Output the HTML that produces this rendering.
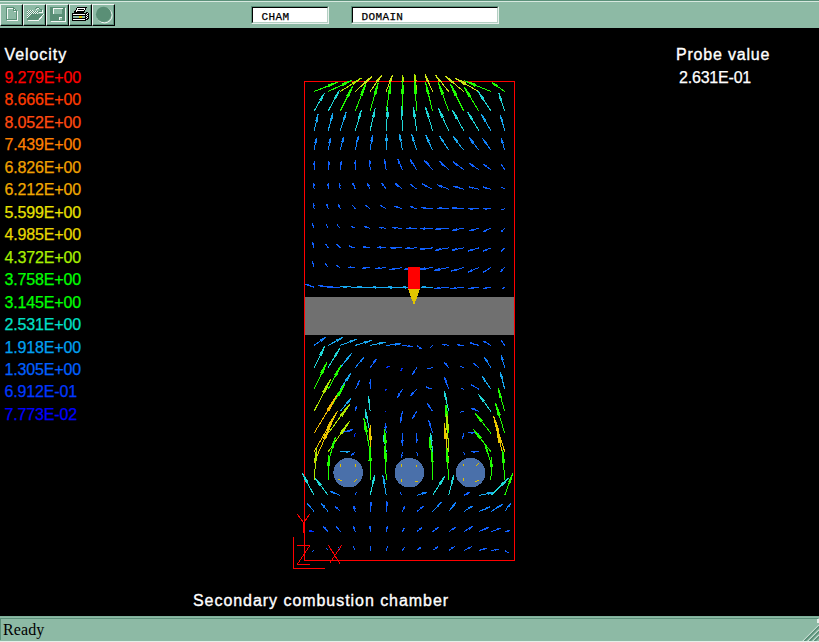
<!DOCTYPE html>
<html><head><meta charset="utf-8"><title>Secondary combustion chamber</title>
<style>
html,body{margin:0;padding:0;background:#000;overflow:hidden}
body{width:819px;height:642px;position:relative;font-family:"Liberation Sans",sans-serif}
#tb{position:absolute;left:0;top:0;width:819px;height:28px;background:#8dbaa5;border-top:1px solid #5b917a;box-sizing:border-box}
#tb:before{content:"";position:absolute;left:0;top:0;width:819px;height:1px;background:#d6e8df}
.btn{position:absolute;top:3px;width:23px;height:22px;box-sizing:border-box;border-left:1px solid #eef4f1;border-top:1px solid #eef4f1;border-right:1px solid #000;border-bottom:1px solid #000;background:#8dbaa5}
.btn:after{content:"";position:absolute;left:0;top:0;right:0;bottom:0;border-right:1px solid #5b917a;border-bottom:1px solid #5b917a}
.btn svg{position:absolute;left:0;top:0}
.fld{position:absolute;top:5px;height:18px;box-sizing:border-box;background:#fff;border:1px solid;border-color:#5b917a #e8f0ec #e8f0ec #5b917a;font:11px "Liberation Mono",monospace;color:#000}
.fld:after{content:"";position:absolute;left:0;top:0;right:0;bottom:0;border:1px solid;border-color:#000 #b4d0c3 #b4d0c3 #000}
.fld span{position:absolute;left:9.6px;top:3px;line-height:14px;letter-spacing:.35px;-webkit-text-stroke:.25px #000}
#sb{position:absolute;left:0;top:616px;width:819px;height:26px;background:#8dbaa5;box-sizing:border-box;border-top:1px solid #7fb09a;border-bottom:1px solid #e4efe9}
#sb .in{position:absolute;left:0;top:1px;width:818px;height:22px;box-sizing:border-box;border-top:1px solid #5b917a;border-left:1px solid #5b917a}
#sb .rw{position:absolute;left:817px;top:2px;width:2px;height:4px;background:#e4efe9}
#sb svg{position:absolute;left:801px;top:6px}
#sb .t{position:absolute;left:3px;top:4px;font:16px "Liberation Serif",serif;color:#000;line-height:18px;letter-spacing:.1px}
.lg{-webkit-text-stroke:.25px currentColor;position:absolute;left:4.4px;letter-spacing:-.15px;margin-top:1px;font-size:16px;line-height:18px;white-space:nowrap}
.w{position:absolute;color:#fff;white-space:nowrap;font-size:16px;line-height:18px;transform-origin:0 0}
  .b{-webkit-text-stroke:0.35px #fff;letter-spacing:.85px}
#plot{position:absolute;left:0;top:28px}
</style></head><body>
<div id="tb">
 <div class="btn" style="left:0"></div>
 <div class="btn" style="left:23px"></div>
 <div class="btn" style="left:46px"></div>
 <div class="btn" style="left:69px"></div>
 <div class="btn" style="left:92px"></div>
<svg id="ic" width="120" height="28" viewBox="0 0 120 28" shape-rendering="crispEdges" style="position:absolute;left:0;top:-1px">
<defs><pattern id="ck" width="2" height="2" patternUnits="userSpaceOnUse"><rect width="2" height="2" fill="#8dbaa5"/><rect width="1" height="1" fill="#f4f8f6"/><rect x="1" y="1" width="1" height="1" fill="#f4f8f6"/><rect x="1" y="0" width="1" height="1" fill="#5a8f76"/><rect x="0" y="1" width="1" height="1" fill="#5a8f76"/></pattern>
<pattern id="ck2" width="2" height="2" patternUnits="userSpaceOnUse"><rect width="2" height="2" fill="#fff"/><rect x="1" y="0" width="1" height="1" fill="#000"/><rect x="0" y="1" width="1" height="1" fill="#000"/></pattern></defs>
<!-- new page -->
<g fill="none" stroke="#f4f8f6"><path d="M7.5 19.5V8.5H13"/><path d="M17.5 11V20.5H7"/><path d="M14 9.5h1M14 11.5h2"/></g>
<g fill="none" stroke="#5a8f76"><path d="M6.5 7.5H13.5L16.5 10.5V19.5H6.5Z"/><path d="M13.5 8V10.5H16"/></g>
<!-- open folder -->
<path d="M27 10h5l1 1h5v4h-6l-5 5z" fill="url(#ck)"/>
<path d="M27 20h11l5 -6h-11z" fill="#5a8f76"/>
<g fill="none" stroke="#f4f8f6"><path d="M28 20.5H38.5L43.5 14.5"/><path d="M36 9.5h1M37 8.5h3M40 9.5h1M41 10.5h1M42 9.5V12.5H39"/></g>
<g fill="none" stroke="#5a8f76"><path d="M35 8.5h1M36 7.5h3M39 8.5h1M40 9.5h1M41 8.5V11.5H38"/></g>
<!-- floppy -->
<path d="M51.5 8V21.5H65.5V8" fill="none" stroke="#f4f8f6"/>
<rect x="50" y="7" width="15" height="14" fill="#5a8f76"/>
<rect x="53" y="8" width="9" height="6" fill="#8dbaa5"/>
<path d="M53.5 14V8.5H62" fill="none" stroke="#f4f8f6"/>
<rect x="62" y="8" width="1" height="1" fill="#f4f8f6"/>
<rect x="59" y="17" width="3" height="3" fill="#8dbaa5"/>
<path d="M59.5 20V17.5H62" fill="none" stroke="#f4f8f6"/>
<!-- printer -->
<path d="M77.5 7.5H86.5L83.5 12.5H74.5Z" fill="#fff" stroke="#000"/>
<path d="M78 9.500H84M77 11.5H83" stroke="#000" fill="none"/>
<path d="M85 13h2l1 1v5l-3 2z" fill="url(#ck2)"/>
<path d="M85.500 12.500L87.500 12.500L88.500 13.500V18.500L85.500 20.500" fill="none" stroke="#000"/>
<rect x="72.500" y="13.500" width="13" height="7" fill="#fff" stroke="#000"/>
<rect x="73" y="16" width="12" height="2" fill="#8dbaa5"/>
<path d="M73 15.500H85M73 18.500H85" stroke="#000" fill="none"/>
<rect x="79" y="16" width="3" height="2" fill="#e0c800"/>
<!-- circle -->
<circle cx="104.600" cy="15.400" r="7.500" fill="none" stroke="#f4f8f6" stroke-width="1" shape-rendering="auto"/>
<circle cx="103.600" cy="14.400" r="7.700" fill="#5a8f76" shape-rendering="auto"/>
</svg>
 <div class="fld" style="left:251px;width:78px"><span>CHAM</span></div>
 <div class="fld" style="left:351px;width:148px"><span>DOMAIN</span></div>
</div>
<svg id="plot" width="819" height="588" viewBox="0 28 819 588" shape-rendering="crispEdges">
<rect x="305" y="297" width="209" height="38" fill="#707070"/>
<rect x="304.5" y="81.5" width="210" height="479" fill="none" stroke="#f00" stroke-width="1"/>
<!--ARROWS-->
<style>.ab0{stroke:#0030ff;fill:#0030ff}.ab{stroke:#1060ff;fill:#1060ff}.ab2{stroke:#1080ff;fill:#1080ff}.acb{stroke:#18a8f0;fill:#18a8f0}.ac{stroke:#20d8d8;fill:#20d8d8}.ag{stroke:#20ff00;fill:#20ff00}.ayg{stroke:#b0e800;fill:#b0e800}.ay{stroke:#cce418;fill:#cce418}.ayo{stroke:#ecc800;fill:#ecc800}.ao{stroke:#f4bc00;fill:#f4bc00}</style><g stroke-width="1">
<path class="ag" d="M314.1 91.5L338 82.1L328.8 86.7L328.1 85L338 82.1"/>
<path class="ag" d="M328.2 91.5L352 80.2L342.9 85.6L342.1 83.9L352 80.2"/>
<path class="ayg" d="M340.3 91.5L361.7 77.9L353.6 84.1L352.7 82.6L361.7 77.9"/>
<path class="ay" d="M355.3 91.5L371.9 76.4L365.8 83.1L364.7 81.8L371.9 76.4"/>
<path class="ay" d="M370.1 91.5L381.9 75.1L377.8 82.1L376.5 81.2L381.9 75.1"/>
<path class="ay" d="M386.2 91.5L392.5 75.1L390.7 81.9L389.3 81.4L392.5 75.1"/>
<path class="ayg" d="M402.4 91.5L402.8 75.1L403.4 81.7L401.9 81.6L402.8 75.1"/>
<path class="ayg" d="M416.7 91.5L414.7 74L416.2 80.9L414.8 81.1L414.7 74"/>
<path class="ay" d="M432.6 91.5L425.1 74.7L428.8 81.1L427.4 81.7L425.1 74.7"/>
<path class="ay" d="M448.7 91.5L435.3 75L441.3 81.1L440 82.1L435.3 75"/>
<path class="ay" d="M463.7 91.5L445.2 76.1L453.2 81.6L452 82.9L445.2 76.1"/>
<path class="ay" d="M478.8 91.5L455 78.1L465 82.6L464.1 84.3L455 78.1"/>
<path class="ag" d="M490.9 91.5L464.4 80.8L475.4 84.2L474.6 86L464.4 80.8"/>
<path class="ag" d="M504.7 91.5L491.9 82.5L497.4 85.5L496.6 86.7L491.9 82.5"/>
<path class="ac" d="M314.1 111L324.6 92.9L321.1 100.6L319.7 99.8L324.6 92.9"/>
<path class="ac" d="M328.2 111L339.6 89.8L335.8 98.7L334.3 97.9L339.6 89.8"/>
<path class="ag" d="M340.3 111L352.7 86.2L348.6 96.6L346.9 95.7L352.7 86.2"/>
<path class="ag" d="M355.3 111L365.8 83.8L362.5 95L360.7 94.3L365.8 83.8"/>
<path class="ag" d="M370.1 111L378.2 82.5L375.9 94.2L374 93.7L378.2 82.5"/>
<path class="ag" d="M386.2 111L391 82.2L390.1 93.9L388.1 93.5L391 82.2"/>
<path class="ag" d="M402.4 111L402.8 81.3L403.6 93.2L401.6 93.2L402.8 81.3"/>
<path class="ag" d="M416.7 111L414.7 81.3L416.5 93.2L414.5 93.3L414.7 81.3"/>
<path class="ag" d="M432.6 111L425.5 82.2L429.3 93.5L427.4 93.9L425.5 82.2"/>
<path class="ag" d="M448.7 111L438.4 82.5L443.5 93.6L441.6 94.3L438.4 82.5"/>
<path class="ag" d="M463.7 111L450.3 83.8L456.6 94.2L454.7 95.1L450.3 83.8"/>
<path class="ag" d="M478.8 111L463.8 86.4L470.6 95.8L469 96.8L463.8 86.4"/>
<path class="ac" d="M490.9 111L477.9 91.2L483.8 98.6L482.4 99.6L477.9 91.2"/>
<path class="ac" d="M504.7 111L498.7 92.9L501.8 99.9L500.4 100.4L498.7 92.9"/>
<path class="acb" d="M314.1 130.6L318.1 114.1L317.2 120.9L315.8 120.5L318.1 114.1"/>
<path class="acb" d="M328.2 130.6L333 112.7L331.8 120.1L330.3 119.7L333 112.7"/>
<path class="acb" d="M340.3 130.6L346.3 111.8L344.6 119.6L343.2 119.1L346.3 111.8"/>
<path class="ac" d="M355.3 130.6L361.5 110L359.8 118.5L358.2 118L361.5 110"/>
<path class="ac" d="M370.1 130.6L375.2 108L374 117.2L372.3 116.9L375.2 108"/>
<path class="ac" d="M386.2 130.6L387.9 106.7L388.1 116.3L386.3 116.2L387.9 106.7"/>
<path class="ac" d="M402.4 130.6L401.5 106L402.8 115.8L401 115.9L401.5 106"/>
<path class="ac" d="M416.7 130.6L413.3 106.7L415.5 116.1L413.8 116.4L413.3 106.7"/>
<path class="ac" d="M432.6 130.6L425.5 107L429.2 116.2L427.5 116.7L425.5 107"/>
<path class="ac" d="M448.7 130.6L438.2 108L443.2 116.7L441.6 117.4L438.2 108"/>
<path class="ac" d="M463.7 130.6L452.3 110L457.6 117.8L456.1 118.7L452.3 110"/>
<path class="ac" d="M478.8 130.6L467.5 111.8L472.7 118.9L471.3 119.7L467.5 111.8"/>
<path class="acb" d="M490.9 130.6L481.2 114.1L485.7 120.3L484.4 121.1L481.2 114.1"/>
<path class="acb" d="M504.7 130.6L500.3 114.8L502.7 120.9L501.4 121.3L500.3 114.8"/>
<path class="ab2" d="M314.1 150.2L316.4 137.7L316.1 142.8L314.9 142.5L316.4 137.7"/>
<path class="ab2" d="M328.2 150.2L330.6 137.7L330.3 142.8L329 142.5L330.6 137.7"/>
<path class="ab2" d="M340.3 150.2L343.7 136.8L343 142.3L341.7 141.9L343.7 136.8"/>
<path class="ab2" d="M355.3 150.2L358.4 135.7L357.8 141.6L356.5 141.3L358.4 135.7"/>
<path class="ab2" d="M370.1 150.2L372.5 134.8L372.2 141L370.9 140.8L372.5 134.8"/>
<path class="acb" d="M386.2 150.2L386.6 133.7L387.2 140.3L385.7 140.2L386.6 133.7"/>
<path class="acb" d="M402.4 150.2L399.7 134.3L401.5 140.6L400.1 140.8L399.7 134.3"/>
<path class="acb" d="M416.7 150.2L411.6 134.3L414.3 140.5L413 140.9L411.6 134.3"/>
<path class="acb" d="M432.6 150.2L425.5 134.8L429 140.6L427.7 141.2L425.5 134.8"/>
<path class="acb" d="M448.7 150.2L439.3 135.7L443.7 141.1L442.4 141.8L439.3 135.7"/>
<path class="acb" d="M463.7 150.2L453.2 136.8L458 141.7L456.8 142.6L453.2 136.8"/>
<path class="ab2" d="M478.8 150.2L469.1 137.7L473.5 142.2L472.4 143.1L469.1 137.7"/>
<path class="ab2" d="M490.9 150.2L482.6 138.3L486.5 142.7L485.4 143.5L482.6 138.3"/>
<path class="ab2" d="M504.7 150.2L501.3 138.3L503.3 142.9L502.1 143.2L501.3 138.3"/>
<path class="ab" d="M314.1 169.7L314.5 161L314.9 164.5L313.8 164.5L314.5 161"/>
<path class="ab" d="M328.2 169.7L328.9 161L329.2 164.5L328.1 164.4L328.9 161"/>
<path class="ab" d="M340.3 169.7L341.4 160.7L341.5 164.4L340.4 164.2L341.4 160.7"/>
<path class="ab" d="M355.3 169.7L355.3 159.9L355.9 163.8L354.7 163.8L355.3 159.9"/>
<path class="ab" d="M370.1 169.7L369.8 159.9L370.5 163.8L369.4 163.8L369.8 159.9"/>
<path class="ab" d="M386.2 169.7L384.3 159L385.6 163.2L384.5 163.4L384.3 159"/>
<path class="ab" d="M402.4 169.7L397.7 159L400.1 163L399 163.5L397.7 159"/>
<path class="ab" d="M416.7 169.7L410 159.4L413.2 163.2L412.2 163.9L410 159.4"/>
<path class="ab" d="M432.6 169.7L424 159.9L427.9 163.4L427 164.2L424 159.9"/>
<path class="ab" d="M448.7 169.7L439 161L443.3 164L442.5 165L439 161"/>
<path class="ab" d="M463.7 169.7L453.2 161.9L457.8 164.5L457 165.5L453.2 161.9"/>
<path class="ab" d="M478.8 169.7L469.1 163L473.3 165.2L472.6 166.2L469.1 163"/>
<path class="ab" d="M490.9 169.7L483.2 164.1L486.6 165.9L486 166.8L483.2 164.1"/>
<path class="ab" d="M504.7 169.7L501.3 164.1L503.1 166.1L502.2 166.6L501.3 164.1"/>
<path class="ab" d="M314.1 189.2L313.7 182.9L314.3 185.4L313.4 185.5L313.7 182.9"/>
<path class="ab" d="M328.2 189.2L328.2 182.9L328.7 185.5L327.7 185.5L328.2 182.9"/>
<path class="ab" d="M340.3 189.2L339 182.9L340 185.4L339 185.6L339 182.9"/>
<path class="ab" d="M355.3 189.2L352.6 182.9L354.1 185.3L353.2 185.7L352.6 182.9"/>
<path class="ab" d="M370.1 189.2L367.4 182.9L368.9 185.3L368 185.7L367.4 182.9"/>
<path class="ab" d="M386.2 189.2L381.5 182.9L383.8 185.2L383 185.8L381.5 182.9"/>
<path class="ab" d="M402.4 189.2L394.7 182.9L398.1 185L397.4 185.9L394.7 182.9"/>
<path class="ab" d="M416.7 189.2L410 184.2L413 185.8L412.4 186.7L410 184.2"/>
<path class="ab" d="M432.6 189.2L422.1 183.8L426.6 185.5L426 186.6L422.1 183.8"/>
<path class="ab" d="M448.7 189.2L437.1 184.7L442 185.9L441.5 187.1L437.1 184.7"/>
<path class="ab" d="M463.7 189.2L453 186.1L457.5 186.8L457.1 187.9L453 186.1"/>
<path class="ab" d="M478.8 189.2L469.1 186.9L473.1 187.3L472.8 188.4L469.1 186.9"/>
<path class="ab" d="M490.9 189.2L483.2 186.9L486.4 187.4L486.1 188.4L483.2 186.9"/>
<path class="ab" d="M504.7 189.2L501.1 186.9"/>
<path class="ab" d="M314.1 208.8L313 203L313.9 205.2L313 205.4L313 203"/>
<path class="ab" d="M328.2 208.8L326.9 203.8L327.9 205.7L327 205.9L326.9 203.8"/>
<path class="ab" d="M340.3 208.8L338 204.1L339.3 205.8L338.5 206.2L338 204.1"/>
<path class="ab" d="M355.3 208.8L352.6 205.2"/>
<path class="ab" d="M370.1 208.8L365.7 205.2L367.8 206.3L367.2 207L365.7 205.2"/>
<path class="ab" d="M386.2 208.8L379.8 205.2L382.6 206.2L382.1 207.1L379.8 205.2"/>
<path class="ab" d="M402.4 208.8L394.4 206.1L397.8 206.7L397.4 207.7L394.4 206.1"/>
<path class="ab" d="M416.7 208.8L410 206.5L412.8 206.9L412.5 207.9L410 206.5"/>
<path class="ab" d="M432.6 208.8L421.2 207.5L425.8 207.4L425.7 208.6L421.2 207.5"/>
<path class="ab" d="M448.7 208.8L437.3 208.1L441.9 207.8L441.8 209L437.3 208.1"/>
<path class="ab" d="M463.7 208.8L451.9 208L456.7 207.7L456.6 208.9L451.9 208"/>
<path class="ab" d="M478.8 208.8L468.3 208.8L472.5 208.2L472.5 209.4L468.3 208.8"/>
<path class="ab" d="M490.9 208.8L483.5 208.8L486.5 208.3L486.5 209.3L483.5 208.8"/>
<path class="ab" d="M504.7 208.8L500.7 210.1"/>
<path class="ab" d="M314.1 228.3L312 223.2L313.3 225.1L312.4 225.4L312 223.2"/>
<path class="ab" d="M328.2 228.3L325.9 223.9"/>
<path class="ab" d="M340.3 228.3L337.1 224.8"/>
<path class="ab" d="M355.3 228.3L350.6 225.8L352.7 226.4L352.3 227.2L350.6 225.8"/>
<path class="ab" d="M370.1 228.3L363.8 226.2L366.5 226.6L366.2 227.6L363.8 226.2"/>
<path class="ab" d="M386.2 228.3L378.8 227.2L381.8 227.2L381.7 228.2L378.8 227.2"/>
<path class="ab" d="M402.4 228.3L391.7 227.5L396 227.3L395.9 228.5L391.7 227.5"/>
<path class="ab" d="M416.7 228.3L406 228.3L410.3 227.8L410.3 228.9L406 228.3"/>
<path class="ab" d="M432.6 228.3L419.8 228.7L424.9 227.9L424.9 229.2L419.8 228.7"/>
<path class="ab" d="M448.7 228.3L434.7 229.2L440.3 228.2L440.3 229.5L434.7 229.2"/>
<path class="ab" d="M463.7 228.3L451.9 230.2L456.5 228.9L456.7 230.1L451.9 230.2"/>
<path class="ab" d="M478.8 228.3L469.1 230.7L472.8 229.2L473.1 230.3L469.1 230.7"/>
<path class="ab" d="M490.9 228.3L483.2 231.5L486.1 229.8L486.5 230.8L483.2 231.5"/>
<path class="ab" d="M504.7 228.3L500.7 232.3L502 230.4L502.6 231.1L500.7 232.3"/>
<path class="ab" d="M314.1 247.9L312 241.9L313.3 244.1L312.4 244.5L312 241.9"/>
<path class="ab" d="M328.2 247.9L325.5 243.6L327 245.1L326.2 245.6L325.5 243.6"/>
<path class="ab" d="M340.3 247.9L336.7 244.1L338.5 245.3L337.8 245.9L336.7 244.1"/>
<path class="ab" d="M355.3 247.9L348.6 245.9L351.4 246.2L351.1 247.2L348.6 245.9"/>
<path class="ab" d="M370.1 247.9L362.7 246.8L365.7 246.7L365.6 247.7L362.7 246.8"/>
<path class="ab" d="M386.2 247.9L376.8 247.2L380.6 246.9L380.5 248L376.8 247.2"/>
<path class="ab" d="M402.4 247.9L390.4 247.9L395.2 247.3L395.2 248.5L390.4 247.9"/>
<path class="ab" d="M416.7 247.9L404.7 248.4L409.5 247.6L409.5 248.8L404.7 248.4"/>
<path class="ab" d="M432.6 247.9L419.6 249.2L424.7 248L424.9 249.3L419.6 249.2"/>
<path class="ab" d="M448.7 247.9L435.3 250.2L440.6 248.6L440.8 249.9L435.3 250.2"/>
<path class="ab" d="M463.7 247.9L451.9 250.2L456.5 248.7L456.7 249.9L451.9 250.2"/>
<path class="ab" d="M478.8 247.9L468.1 251.1L472.2 249.2L472.6 250.4L468.1 251.1"/>
<path class="ab" d="M490.9 247.9L483.2 251.1L486.1 249.3L486.5 250.3L483.2 251.1"/>
<path class="ab" d="M504.7 247.9L500.7 251.5L502 249.7L502.6 250.4L500.7 251.5"/>
<path class="ab" d="M314.1 267.5L312 261.2L313.3 263.5L312.4 263.8L312 261.2"/>
<path class="ab" d="M328.2 267.5L325 263.2L326.7 264.6L325.9 265.1L325 263.2"/>
<path class="ab" d="M340.3 267.5L336 265.2"/>
<path class="ab" d="M355.3 267.5L347.6 267.5L350.7 266.9L350.7 268L347.6 267.5"/>
<path class="ab" d="M370.1 267.5L361.6 268.4L364.9 267.5L365.1 268.5L361.6 268.4"/>
<path class="ab" d="M386.2 267.5L374.8 268.8L379.3 267.6L379.4 268.8L374.8 268.8"/>
<path class="ab" d="M402.4 267.5L389.6 269.9L394.6 268.3L394.8 269.5L389.6 269.9"/>
<path class="ab" d="M416.7 267.5L403.7 269.5L408.8 268L409 269.3L403.7 269.5"/>
<path class="ab" d="M432.6 267.5L419.8 269.2L424.8 267.8L425 269.1L419.8 269.2"/>
<path class="ab" d="M448.7 267.5L433.7 270.6L439.6 268.6L439.8 270L433.7 270.6"/>
<path class="ab" d="M463.7 267.5L450.9 271.3L455.8 269.1L456.2 270.3L450.9 271.3"/>
<path class="ab" d="M478.8 267.5L467.7 272.3L471.9 269.8L472.4 270.9L467.7 272.3"/>
<path class="ab" d="M490.9 267.5L483.2 272.3L486 269.9L486.6 270.8L483.2 272.3"/>
<path class="ab" d="M504.7 267.5L500.7 271.8L501.9 269.7L502.7 270.4L500.7 271.8"/>
<path class="ab" d="M314.1 287.2L305 284.2L308.8 284.9L308.5 285.9L305 284.2"/>
<path class="ab" d="M328.2 287.2L318.2 285.2L322.3 285.4L322.1 286.6L318.2 285.2"/>
<path class="ab" d="M340.3 287.2L326.6 286.9L332.1 286.4L332.1 287.7L326.6 286.9"/>
<path class="acb" d="M355.3 287.2L340.5 286.5L346.5 286.1L346.4 287.5L340.5 286.5"/>
<path class="acb" d="M370.1 287.2L355.3 287.2L361.2 286.5L361.2 287.9L355.3 287.2"/>
<path class="acb" d="M386.2 287.2L368.7 287.5L375.7 286.6L375.7 288.1L368.7 287.5"/>
<path class="acb" d="M402.4 287.2L383.6 287.5L391.1 286.6L391.1 288.1L383.6 287.5"/>
<path class="acb" d="M416.7 287.2L398.7 287.5L405.9 286.6L405.9 288.1L398.7 287.5"/>
<path class="acb" d="M432.6 287.2L420.6 287.2L425.4 286.6L425.4 287.8L420.6 287.2"/>
<path class="ab" d="M448.7 287.2L433.7 288.8L439.6 287.5L439.8 288.8L433.7 288.8"/>
<path class="ab" d="M463.7 287.2L450.4 288.8L455.6 287.5L455.8 288.8L450.4 288.8"/>
<path class="ab" d="M478.8 287.2L468.3 288.8L472.4 287.6L472.6 288.7L468.3 288.8"/>
<path class="ab" d="M490.9 287.2L483.4 288.8L486.3 287.7L486.5 288.7L483.4 288.8"/>
<path class="ab" d="M504.7 287.2L501.5 289.2"/>
<path class="ab2" d="M314.1 345.4L325.5 337.3L321.3 341.1L320.6 340L325.5 337.3"/>
<path class="acb" d="M328.2 345.4L343 337.3L337.4 341.2L336.7 339.9L343 337.3"/>
<path class="acb" d="M340.3 345.4L357.1 339.1L350.6 342.3L350.1 340.9L357.1 339.1"/>
<path class="acb" d="M355.3 345.4L371.8 340.4L365.4 343.1L365 341.7L371.8 340.4"/>
<path class="acb" d="M370.1 345.4L385.9 342.2L379.7 344.2L379.4 342.8L385.9 342.2"/>
<path class="ab2" d="M386.2 345.4L401.2 343.8L395.3 345.1L395.1 343.8L401.2 343.8"/>
<path class="ab" d="M402.4 345.4L412.7 346.7L408.5 346.8L408.7 345.6L412.7 346.7"/>
<path class="ab" d="M416.7 345.4L421.8 349L419.5 348L420 347.2L421.8 349"/>
<path class="ab" d="M432.6 345.4L429.9 348.2"/>
<path class="ab" d="M448.7 345.4L442.3 344.1L445 344.1L444.8 345.1L442.3 344.1"/>
<path class="ab" d="M463.7 345.4L457.1 344.7L459.8 344.5L459.7 345.5L457.1 344.7"/>
<path class="ab" d="M478.8 345.4L469.9 342.7L473.6 343.2L473.3 344.3L469.9 342.7"/>
<path class="ab" d="M490.9 345.4L483.1 341L486.5 342.3L486 343.2L483.1 341"/>
<path class="ab" d="M504.7 345.4L500.9 339.6L502.8 341.6L502 342.2L500.9 339.6"/>
<path class="ac" d="M314.1 367.6L324.8 346.4L321.3 355.3L319.7 354.5L324.8 346.4"/>
<path class="ac" d="M328.2 367.6L339.9 348.1L335.9 356.3L334.5 355.5L339.9 348.1"/>
<path class="acb" d="M340.3 367.6L351.7 353.1L347.7 359.4L346.5 358.4L351.7 353.1"/>
<path class="ab2" d="M355.3 367.6L363.8 357.3L360.9 361.8L359.9 361L363.8 357.3"/>
<path class="ab" d="M370.1 367.6L376.8 358.9L374.6 362.7L373.7 362L376.8 358.9"/>
<path class="ab0" d="M386.2 367.6L389.4 366.1"/>
<path class="ab0" d="M402.4 367.6L400.8 371"/>
<path class="ab" d="M416.7 367.6L412.1 375L413.5 371.8L414.4 372.3L412.1 375"/>
<path class="ab" d="M432.6 367.6L426.8 368.9L429 367.9L429.2 368.8L426.8 368.9"/>
<path class="ab" d="M448.7 367.6L443.9 362L446.2 363.9L445.4 364.6L443.9 362"/>
<path class="ab" d="M463.7 367.6L460.1 366.3"/>
<path class="ab" d="M478.8 367.6L473 362.9L475.6 364.4L475 365.2L473 362.9"/>
<path class="ab2" d="M490.9 367.6L484.2 357.3L487.4 361.1L486.4 361.8L484.2 357.3"/>
<path class="ab2" d="M504.7 367.6L501.2 355.2L503.2 360L502 360.3L501.2 355.2"/>
<path class="ag" d="M314.1 389.1L326.9 362.2L322.7 373.4L320.9 372.5L326.9 362.2"/>
<path class="ag" d="M328.2 389.1L341 365.2L336.7 375.2L335 374.3L341 365.2"/>
<path class="acb" d="M340.3 389.1L350.7 373.5L347.2 380.2L345.9 379.3L350.7 373.5"/>
<path class="ab" d="M355.3 389.1L359.7 380.4L358.4 384.1L357.4 383.6L359.7 380.4"/>
<path class="ab" d="M370.1 389.1L370.5 379.1L370.9 383.1L369.8 383.1L370.5 379.1"/>
<path class="ab0" d="M386.2 389.1L384.9 390.4"/>
<path class="ab" d="M402.4 389.1L397.3 397.8L398.8 394L399.8 394.6L397.3 397.8"/>
<path class="ab" d="M416.7 389.1L410.4 395.8L412.5 392.7L413.3 393.5L410.4 395.8"/>
<path class="ab" d="M432.6 389.1L425.5 386.8L428.5 387.2L428.2 388.2L425.5 386.8"/>
<path class="ab" d="M448.7 389.1L444.3 377.1L446.7 381.7L445.5 382.1L444.3 377.1"/>
<path class="ab" d="M463.7 389.1L460.5 388.7"/>
<path class="ab" d="M478.8 389.1L471 384.7L474.4 386L473.9 386.9L471 384.7"/>
<path class="acb" d="M490.9 389.1L482 376.3L486.1 381L485 381.8L482 376.3"/>
<path class="acb" d="M504.7 389.1L500.3 371.9L502.8 378.6L501.3 379L500.3 371.9"/>
<path class="ayg" d="M314.1 411.3L330.7 379L325 392.4L323.1 391.4L330.7 379"/>
<path class="ag" d="M328.2 411.3L345.2 383.7L339.3 395.3L337.5 394.2L345.2 383.7"/>
<path class="acb" d="M340.3 411.3L351.3 397.9L347.5 403.7L346.3 402.8L351.3 397.9"/>
<path class="ab" d="M355.3 411.3L356.6 405.9L356.5 408.2L355.6 407.9L356.6 405.9"/>
<path class="ac" d="M370.1 411.3L368.5 396.3L369.8 402.2L368.5 402.4L368.5 396.3"/>
<path class="ab0" d="M386.2 411.3L385.2 411.6"/>
<path class="ab" d="M402.4 411.3L400.4 422.7L400.6 418L401.8 418.2L400.4 422.7"/>
<path class="ab" d="M416.7 411.3L412.4 418.7L413.7 415.5L414.6 416L412.4 418.7"/>
<path class="ab" d="M432.6 411.3L427 403.3L429.7 406.2L428.8 406.8L427 403.3"/>
<path class="ac" d="M448.7 411.3L444.3 391.3L446.8 399.1L445.3 399.5L444.3 391.3"/>
<path class="ab" d="M463.7 411.3L460 412.3"/>
<path class="ab" d="M478.8 411.3L471 408.2L474.3 408.9L473.9 409.9L471 408.2"/>
<path class="ac" d="M490.9 411.3L478.3 394.1L484 400.5L482.7 401.5L478.3 394.1"/>
<path class="ag" d="M504.7 411.3L498.1 388.1L501.6 397.1L499.9 397.6L498.1 388.1"/>
<path class="ao" d="M314.1 433.2L337.1 395L328.8 410.8L327 409.7L337.1 395"/>
<path class="ayg" d="M328.2 433.2L350 403.8L342.2 416.2L340.4 414.9L350 403.8"/>
<path class="ab" d="M340.3 433.2L353.1 429.5L348.2 431.6L347.8 430.4L353.1 429.5"/>
<path class="ab0" d="M355.3 433.2L354.4 436.6"/>
<path class="ac" d="M370.1 433.2L365 409.2L367.9 418.6L366.2 419L365 409.2"/>
<path class="ab" d="M386.2 433.2L385.2 423.2L386.2 427.1L385 427.3L385.2 423.2"/>
<path class="ab" d="M402.4 433.2L402.4 446L401.8 440.9L403 440.9L402.4 446"/>
<path class="ab" d="M416.7 433.2L416.7 443.2L416.1 439.2L417.3 439.2L416.7 443.2"/>
<path class="ab" d="M432.6 433.2L428.6 419.8L430.8 425L429.6 425.3L428.6 419.8"/>
<path class="ag" d="M448.7 433.2L445.9 404.6L448 415.9L446 416.1L445.9 404.6"/>
<path class="ab" d="M463.7 433.2L462.2 438.8L462.3 436.4L463.3 436.7L462.2 438.8"/>
<path class="ab" d="M478.8 433.2L468.4 432.5L472.6 432.2L472.5 433.4L468.4 432.5"/>
<path class="ag" d="M490.9 433.2L475.3 413.5L482.2 420.8L480.8 421.9L475.3 413.5"/>
<path class="ag" d="M504.7 433.2L495.4 402.9L500.1 414.7L498.1 415.3L495.4 402.9"/>
<path class="ayo" d="M314.1 451.7L337.5 411.3L329.1 428L327.2 426.9L337.5 411.3"/>
<path class="ayg" d="M328.2 451.7L350 420.7L342.2 433.7L340.4 432.5L350 420.7"/>
<path class="acb" d="M340.3 451.7L350.1 451.7L346.2 452.3L346.2 451.1L350.1 451.7"/>
<path class="ab" d="M355.3 451.7L351 455.4L352.4 453.6L353 454.3L351 455.4"/>
<path class="ag" d="M370.1 451.7L363.8 417.9L367.4 431.2L365.2 431.6L363.8 417.9"/>
<path class="ac" d="M386.2 451.7L383.7 435L385.4 441.6L384 441.8L383.7 435"/>
<path class="ab" d="M402.4 451.7L401.4 457.7L401.3 455.2L402.3 455.4L401.4 457.7"/>
<path class="ab" d="M416.7 451.7L417.7 456.4"/>
<path class="ac" d="M432.6 451.7L430.6 433.5L432.1 440.7L430.7 440.9L430.6 433.5"/>
<path class="ayg" d="M448.7 451.7L446.8 414.4L448.7 429.3L446.5 429.4L446.8 414.4"/>
<path class="ab" d="M463.7 451.7L464.9 455.1"/>
<path class="ab" d="M478.8 451.7L471 451.7L474.1 451.2L474.1 452.2L471 451.7"/>
<path class="ag" d="M490.9 451.7L473.2 429.1L481.1 437.5L479.5 438.7L473.2 429.1"/>
<path class="ayo" d="M504.7 451.7L493.5 416.2L499 430.1L496.9 430.7L493.5 416.2"/>
<path class="ayo" d="M314.1 462.5L331.8 422.5L325.7 438.9L323.7 438.1L331.8 422.5"/>
<path class="ag" d="M328.2 462.5L335.4 437L333.4 447.5L331.6 446.9L335.4 437"/>
<path class="ayo" d="M370.1 462.5L370.3 424.9L371.3 439.9L369.1 439.9L370.3 424.9"/>
<path class="ag" d="M386.2 462.5L384.5 428.8L386.3 442.2L384.1 442.3L384.5 428.8"/>
<path class="ag" d="M432.6 462.5L429.3 437.1L431.5 447.1L429.7 447.4L429.3 437.1"/>
<path class="ayo" d="M448.7 462.5L444.1 422.6L447 438.4L444.8 438.7L444.1 422.6"/>
<path class="ag" d="M490.9 462.5L484.8 443.7L488 451L486.5 451.5L484.8 443.7"/>
<path class="ayo" d="M504.7 462.5L496.6 428.7L500.9 442L498.8 442.5L496.6 428.7"/>
<path class="ayg" d="M314.1 480.4L316.7 447.4L316.7 460.7L314.6 460.5L316.7 447.4"/>
<path class="ag" d="M328.2 480.4L328.8 455.4L329.5 465.4L327.7 465.4L328.8 455.4"/>
<path class="ag" d="M370.1 480.4L370.1 446.7L371.2 460.2L369 460.2L370.1 446.7"/>
<path class="ag" d="M386.2 480.4L385.1 444.4L386.6 458.8L384.4 458.8L385.1 444.4"/>
<path class="ag" d="M432.6 480.4L431.7 449.4L433.1 461.8L431 461.8L431.7 449.4"/>
<path class="ag" d="M448.7 480.4L446.8 448.4L448.6 461.1L446.5 461.3L446.8 448.4"/>
<path class="ag" d="M490.9 480.4L491.6 457.4L492.2 466.6L490.5 466.6L491.6 457.4"/>
<path class="ag" d="M504.7 480.4L502.7 450.1L504.5 462.2L502.5 462.3L502.7 450.1"/>
<path class="ac" d="M314.1 495.4L302.4 473.2L307.9 481.7L306.3 482.5L302.4 473.2"/>
<path class="ac" d="M328.2 495.4L315.2 478.3L321.1 484.6L319.7 485.6L315.2 478.3"/>
<path class="ab2" d="M340.3 495.4L330.3 491.4L334.5 492.5L334.1 493.5L330.3 491.4"/>
<path class="ab" d="M355.3 495.4L356.5 492"/>
<path class="ac" d="M370.1 495.4L374.8 475.2L373.7 483.5L372.1 483.1L374.8 475.2"/>
<path class="acb" d="M386.2 495.4L382.9 475.2L385 483.2L383.4 483.4L382.9 475.2"/>
<path class="ab" d="M402.4 495.4L400.1 492.7"/>
<path class="ab2" d="M416.7 495.4L426.7 492.4L422.9 494.2L422.5 493L426.7 492.4"/>
<path class="ac" d="M432.6 495.4L444.9 476L440.7 484.2L439.3 483.3L444.9 476"/>
<path class="ac" d="M448.7 495.4L453.7 475L452.5 483.4L450.9 483L453.7 475"/>
<path class="ab" d="M463.7 495.4L469.7 492.3L467.5 494L467.1 493.1L469.7 492.3"/>
<path class="acb" d="M478.8 495.4L494.2 492.3L488.2 494.2L487.9 492.9L494.2 492.3"/>
<path class="ac" d="M490.9 495.4L508.8 478L502.3 485.6L501 484.3L508.8 478"/>
<path class="ag" d="M504.7 495.4L512.8 473.1L510.4 482.3L508.7 481.7L512.8 473.1"/>
<path class="ab2" d="M314.1 511.6L307 503.1L310.3 506.1L309.4 506.9L307 503.1"/>
<path class="ab2" d="M328.2 511.6L321.2 503.1L324.5 506.1L323.5 506.9L321.2 503.1"/>
<path class="ab" d="M340.3 511.6L335.2 506.2L337.6 508L336.9 508.7L335.2 506.2"/>
<path class="ab" d="M355.3 511.6L353.8 506.2L354.9 508.2L353.9 508.5L353.8 506.2"/>
<path class="ab" d="M370.1 511.6L371.2 501.6L371.3 505.7L370.2 505.5L371.2 501.6"/>
<path class="ab" d="M386.2 511.6L387 501.6L387.2 505.6L386.1 505.6L387 501.6"/>
<path class="ab" d="M402.4 511.6L404.5 506.2L404.1 508.5L403.2 508.2L404.5 506.2"/>
<path class="ab" d="M416.7 511.6L424.1 506.2L421.5 508.8L420.8 507.9L424.1 506.2"/>
<path class="ab2" d="M432.6 511.6L441.2 502.2L438.2 506.4L437.3 505.5L441.2 502.2"/>
<path class="ab2" d="M448.7 511.6L456 502.2L453.6 506.3L452.6 505.6L456 502.2"/>
<path class="ab2" d="M463.7 511.6L472.4 506.2L469.2 508.8L468.6 507.9L472.4 506.2"/>
<path class="ab2" d="M478.8 511.6L489.9 506.9L485.7 509.3L485.2 508.2L489.9 506.9"/>
<path class="ab2" d="M490.9 511.6L502.7 504.2L498.3 507.7L497.6 506.6L502.7 504.2"/>
<path class="ab2" d="M504.7 511.6L510.7 503.1L508.8 506.8L507.8 506.2L510.7 503.1"/>
<path class="ab0" d="M314.1 531.7L309.1 531L311.2 530.8L311 531.7L309.1 531"/>
<path class="ab" d="M328.2 531.7L323.1 526.3L325.5 528.1L324.8 528.8L323.1 526.3"/>
<path class="ab" d="M340.3 531.7L336.3 526.3L338.3 528.2L337.5 528.8L336.3 526.3"/>
<path class="ab" d="M355.3 531.7L353.6 526.3L354.7 528.3L353.8 528.6L353.6 526.3"/>
<path class="ab" d="M370.1 531.7L370.1 526.1L370.6 528.3L369.6 528.3L370.1 526.1"/>
<path class="ab" d="M386.2 531.7L387.5 526.1L387.4 528.4L386.5 528.2L387.5 526.1"/>
<path class="ab" d="M402.4 531.7L404.5 527.7"/>
<path class="ab" d="M416.7 531.7L422.1 527.7L420.2 529.7L419.6 528.9L422.1 527.7"/>
<path class="ab" d="M432.6 531.7L438.9 527L436.7 529.3L436.1 528.5L438.9 527"/>
<path class="ab" d="M448.7 531.7L456 527L453.4 529.3L452.8 528.4L456 527"/>
<path class="ab" d="M463.7 531.7L472.8 526.3L469.5 529L468.9 528L472.8 526.3"/>
<path class="ab" d="M478.8 531.7L488.6 527.3L484.9 529.6L484.4 528.5L488.6 527.3"/>
<path class="ab" d="M490.9 531.7L501.1 528.1L497.2 530.1L496.8 529L501.1 528.1"/>
<path class="ab" d="M504.7 531.7L509.7 530.4L507.8 531.4L507.6 530.5L509.7 530.4"/>
<path class="ab" d="M314.1 550.5L312.1 551.8"/>
<path class="ab" d="M328.2 550.5L326.2 547.8"/>
<path class="ab" d="M340.3 550.5L338.7 547.1"/>
<path class="ab" d="M355.3 550.5L353.2 546.1"/>
<path class="ab" d="M370.1 550.5L370.1 546.1"/>
<path class="ab" d="M386.2 550.5L387.5 546.1"/>
<path class="ab" d="M402.4 550.5L404.5 547.4"/>
<path class="ab" d="M416.7 550.5L421.4 546.7L419.8 548.6L419.2 547.8L421.4 546.7"/>
<path class="ab" d="M432.6 550.5L438 546.7L436.1 548.6L435.6 547.8L438 546.7"/>
<path class="ab" d="M448.7 550.5L454.6 546.7L452.5 548.6L452 547.8L454.6 546.7"/>
<path class="ab" d="M463.7 550.5L471.7 546.7L468.7 548.7L468.3 547.7L471.7 546.7"/>
<path class="ab" d="M478.8 550.5L486.6 548.2L483.6 549.6L483.3 548.6L486.6 548.2"/>
<path class="ab" d="M490.9 550.5L498.7 549.2L495.7 550.2L495.5 549.2L498.7 549.2"/>
<path class="ab" d="M504.7 550.5L508.7 553.2"/>
</g>
<!--/ARROWS-->
<g fill="#4a70aa" shape-rendering="crispEdges"><circle cx="348.2" cy="472.7" r="14.8"/><circle cx="409.4" cy="472.7" r="14.8"/><circle cx="470.6" cy="472.7" r="14.8"/></g>
<g stroke="#e0c000" stroke-width="1" fill="none"><path d="M340.500 464v3M355.500 464v3M338.500 479l3 2M357 479l-3 3M401.500 464v3M416.500 465v2M401.500 479v3M415 481h3M463.500 464v2M479 463l-3 3M463.500 478v3M475 482l4 -2"/></g>
<rect x="408" y="267" width="12" height="22" fill="#f00"/>
<path d="M408 289H420L414.500 304H413.500Z" fill="#e0c400"/>
<g stroke="#f00" stroke-width="1" fill="none"><path d="M297.500 514.500L303.500 522.500M309.500 514.500L304.500 521.500M293.500 537V568.500H325M297 545.500H310M309.500 546L297.500 564M297 564.500H310M328.500 545.500L340.500 564.500M341.500 545.500L329.500 563.500"/><path stroke-width="2" d="M304 522V533"/></g>
</svg>
<div class="w b" style="left:4.4px;top:46px;letter-spacing:.95px">Velocity</div>
<div class="lg" style="top:68px;color:#ff0000">9.279E+00</div>
<div class="lg" style="top:90px;color:#ff3c00">8.666E+00</div>
<div class="lg" style="top:113px;color:#ff4a10">8.052E+00</div>
<div class="lg" style="top:135px;color:#ff8000">7.439E+00</div>
<div class="lg" style="top:158px;color:#f0a000">6.826E+00</div>
<div class="lg" style="top:180px;color:#f0a800">6.212E+00</div>
<div class="lg" style="top:203px;color:#e8e000">5.599E+00</div>
<div class="lg" style="top:225px;color:#e8d800">4.985E+00</div>
<div class="lg" style="top:248px;color:#a8f000">4.372E+00</div>
<div class="lg" style="top:270px;color:#00ff00">3.758E+00</div>
<div class="lg" style="top:293px;color:#00ff00">3.145E+00</div>
<div class="lg" style="top:315px;color:#00e0c8">2.531E+00</div>
<div class="lg" style="top:338px;color:#00a0f0">1.918E+00</div>
<div class="lg" style="top:360px;color:#0060ff">1.305E+00</div>
<div class="lg" style="top:382px;color:#0038ff">6.912E-01</div>
<div class="lg" style="top:405px;color:#0000ff">7.773E-02</div>
<div class="w b" style="left:676px;top:46px;letter-spacing:.8px">Probe value</div>
<div class="w" style="left:679px;top:69px;letter-spacing:-.2px;-webkit-text-stroke:.25px #fff">2.631E-01</div>
<div class="w b" style="left:193px;top:592px;letter-spacing:.95px">Secondary combustion chamber</div>
<div id="sb"><div class="in"></div><div class="rw"></div><div class="t">Ready</div><svg width="18" height="18" viewBox="0 0 18 18"><rect x="0" y="16" width="18" height="2" fill="#8dbaa5"/><g stroke="#5b917a" stroke-width="2.2"><path d="M3.500 18L18 3.500M8.500 18L18 8.500M13.500 18L18 13.500"/></g><g stroke="#e4efe9" stroke-width=".9"><path d="M1.800 18L18 1.800M6.800 18L18 6.800M11.800 18L18 11.800"/></g></svg></div>
</body></html>
